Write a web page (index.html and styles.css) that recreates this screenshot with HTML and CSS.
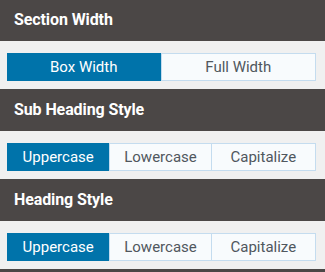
FILE: index.html
```html
<!DOCTYPE html>
<html>
<head>
<meta charset="utf-8">
<link rel="stylesheet" href="styles.css">
</head>
<body>
<div class="panel">
  <section class="section">
    <div class="section-head">Section Width</div>
    <div class="section-body">
      <div class="btn-group">
        <button class="btn active">Box Width</button>
        <button class="btn">Full Width</button>
      </div>
    </div>
  </section>
  <section class="section">
    <div class="section-head">Sub Heading Style</div>
    <div class="section-body">
      <div class="btn-group three">
        <button class="btn active">Uppercase</button>
        <button class="btn">Lowercase</button>
        <button class="btn">Capitalize</button>
      </div>
    </div>
  </section>
  <section class="section">
    <div class="section-head">Heading Style</div>
    <div class="section-body">
      <div class="btn-group three">
        <button class="btn active">Uppercase</button>
        <button class="btn">Lowercase</button>
        <button class="btn">Capitalize</button>
      </div>
    </div>
  </section>
  <div class="section-head next"></div>
</div>
</body>
</html>
```
FILE: styles.css
```css
html, body {
  margin: 0;
  padding: 0;
  background: #f0f0f0;
  overflow: hidden;
}
.panel {
  width: 325px;
  height: 273px;
  overflow: hidden;
  margin-top: -1px;
  font-family: Roboto, "Liberation Sans", sans-serif;
}
.section-head {
  height: 42px;
  line-height: 42px;
  background: #4b4746;
  color: #ffffff;
  font-size: 16px;
  font-weight: 700;
  padding-left: 14px;
  letter-spacing: -0.1px;
}
.section-body {
  padding: 12px 9px 8px 7px;
  background: #f0f0f0;
}
.btn-group {
  display: flex;
  height: 28px;
  border: 1px solid #c4dcef;
  box-sizing: border-box;
  background: #f8fbfd;
}
.btn {
  flex: 1 1 0;
  margin: 0;
  padding: 0;
  border: 0;
  border-left: 1px solid #c4dcef;
  background: #f8fbfd;
  color: #50575e;
  font-family: Roboto, "Liberation Sans", sans-serif;
  font-size: 15px;
  line-height: 26px;
  text-align: center;
}
.btn-group.three .btn:nth-child(1) { flex: 103 1 0; }
.btn-group.three .btn:nth-child(2) { flex: 101 1 0; }
.btn-group.three .btn:nth-child(3) { flex: 104 1 0; }
.btn:first-child {
  border-left: 0;
}
.btn.active {
  background: #0073aa;
  color: #ffffff;
  margin: -1px 0 -1px -1px;
  line-height: 28px;
}
```
